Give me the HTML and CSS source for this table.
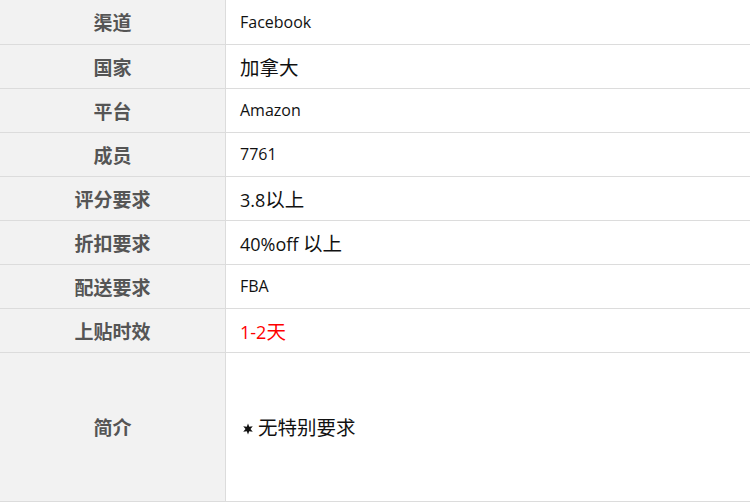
FILE: index.html
```html
<!DOCTYPE html>
<html lang="zh">
<head>
<meta charset="utf-8">
<link rel="stylesheet" href="styles.css">
</head>
<body>
<table class="info">
  <tr><th>渠道</th><td>Facebook</td></tr>
  <tr><th>国家</th><td class="cjk">加拿大</td></tr>
  <tr><th>平台</th><td>Amazon</td></tr>
  <tr><th>成员</th><td>7761</td></tr>
  <tr><th>评分要求</th><td class="mix">3.8<span class="han">以上</span></td></tr>
  <tr><th>折扣要求</th><td class="mix">40%off <span class="han">以上</span></td></tr>
  <tr><th>配送要求</th><td>FBA</td></tr>
  <tr><th>上贴时效</th><td class="mix red">1-2<span class="han">天</span></td></tr>
  <tr class="tall"><th>简介</th><td class="cjk"><svg class="star" width="12" height="12" viewBox="0 0 12 12" aria-hidden="true"><polygon points="6,0.5 7.25,3.84 10.76,3.25 8.5,6 10.76,8.75 7.25,8.17 6,11.5 4.75,8.17 1.24,8.75 3.5,6 1.24,3.25 4.75,3.84" fill="#111"/></svg>无特别要求</td></tr>
</table>
</body>
</html>
```
FILE: styles.css
```css
html, body {
  margin: 0;
  padding: 0;
  background: #ffffff;
}
.info {
  border-collapse: collapse;
  width: 751px;
  table-layout: fixed;
  font-family: "Open Sans", "Noto Sans CJK SC", sans-serif;
}
.info tr {
  height: 44px;
}
.info tr.tall {
  height: 149px;
}
.info th,
.info td {
  border-bottom: 1px solid #dcdcdc;
  padding: 0;
  vertical-align: middle;
}
.info th {
  width: 225px;
  background: #f2f2f2;
  color: #555555;
  font-family: "Noto Sans CJK SC", sans-serif;
  font-weight: bold;
  font-size: 19px;
  text-align: center;
  border-right: 1px solid #dcdcdc;
}
.info td {
  padding-left: 14px;
  color: #111111;
  font-size: 16px;
  text-align: left;
}
.info td.cjk {
  font-size: 19.5px;
}
.info td.mix {
  font-size: 18px;
}
.info td.mix .han {
  font-size: 19.5px;
}
.info td.red {
  color: #ff0000;
}
.star {
  display: inline-block;
  vertical-align: 0;
  margin-left: 2px;
  margin-right: 4px;
}
```
